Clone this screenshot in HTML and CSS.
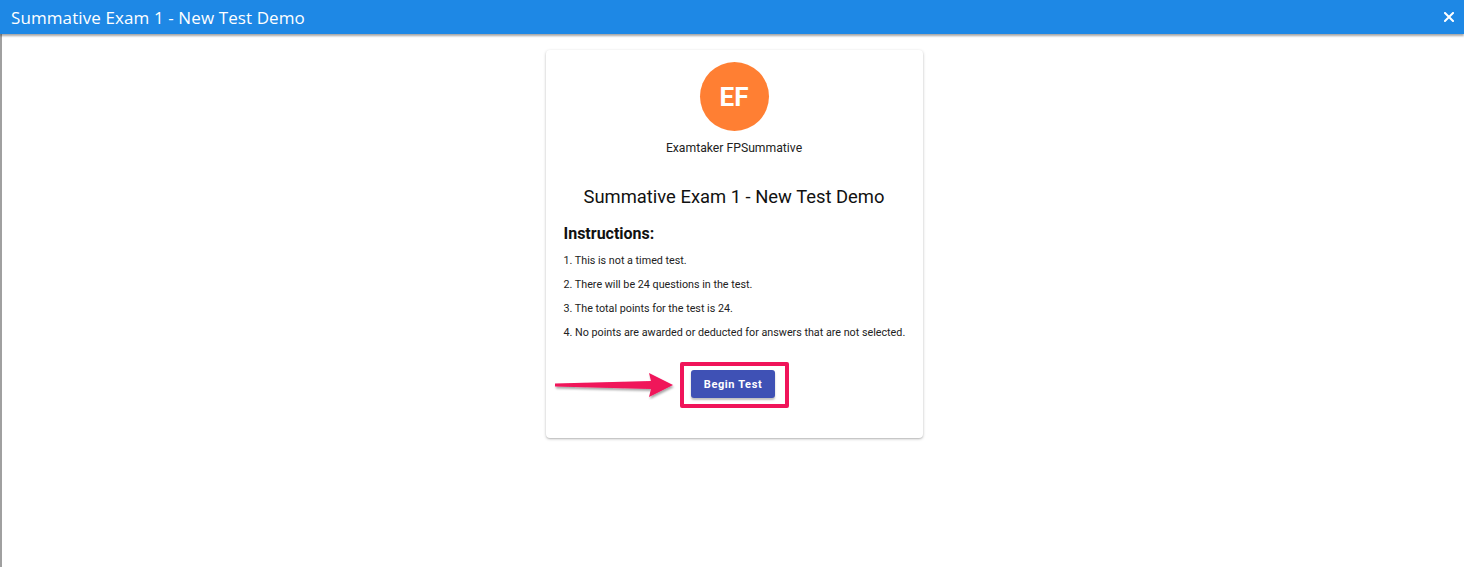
FILE: index.html
```html
<!DOCTYPE html>
<html lang="en">
<head>
    <meta charset="UTF-8">
    <meta name="viewport" content="width=device-width, initial-scale=1.0">
    <title>Summative Exam 1 - New Test Demo</title>
    <link rel="stylesheet" href="styles.css">
</head>
<body>

    <!-- Top bar -->
    <header class="topbar">
        <span class="topbar-title">Summative Exam 1 - New Test Demo</span>
        <button class="close-btn" aria-label="Close">
            <svg width="10" height="10" viewBox="0 0 10 10">
                <path d="M1 1 L9 9 M9 1 L1 9" stroke="#fff" stroke-width="2" stroke-linecap="square"/>
            </svg>
        </button>
    </header>

    <main class="content">
        <div class="card">
            <div class="avatar">EF</div>
            <p class="user-name">Examtaker FPSummative</p>

            <h2 class="exam-title">Summative Exam 1 - New Test Demo</h2>

            <div class="instructions">
                <h3>Instructions:</h3>
                <ol>
                    <li>1. This is not a timed test.</li>
                    <li>2. There will be 24 questions in the test.</li>
                    <li>3. The total points for the test is 24.</li>
                    <li>4. No points are awarded or deducted for answers that are not selected.</li>
                </ol>
            </div>

            <div class="begin-row">
                <!-- annotation arrow -->
                <svg class="arrow" width="124" height="30" viewBox="0 0 124 30">
                    <defs>
                        <filter id="shadow" x="-10%" y="-30%" width="120%" height="180%">
                            <feDropShadow dx="1" dy="2" stdDeviation="1.2" flood-color="#000" flood-opacity="0.35"/>
                        </filter>
                    </defs>
                    <path d="M2 13.5 L98 11 L96 3 L120 15 L96 27 L98 19 L2 16.5 Z" fill="#f0145a" filter="url(#shadow)"/>
                </svg>
                <div class="highlight">
                    <button class="begin-btn">Begin Test</button>
                </div>
            </div>
        </div>
    </main>

</body>
</html>
```

FILE: styles.css
```css
body {
    margin: 0;
    font-family: Roboto, Arial, sans-serif;
    background-color: #fff;
    color: #212121;
}

.topbar {
    height: 34px;
    background-color: #1e88e5;
    display: flex;
    align-items: center;
    justify-content: space-between;
    padding: 0 6px 0 11px;
    box-shadow: 0 2px 2px rgba(0, 0, 0, 0.35);
    position: relative;
}

.topbar-title {
    color: #fff;
    font-family: "Open Sans", sans-serif;
    font-size: 17px;
    letter-spacing: 0.1px;
}

.close-btn {
    background: none;
    border: none;
    padding: 4px;
    display: flex;
    cursor: pointer;
}

.content {
    border-left: 2px solid #a0a0a0;
    min-height: 533px;
    box-sizing: border-box;
    display: flex;
    justify-content: center;
    align-items: flex-start;
    padding-top: 16px;
}

.card {
    width: 377px;
    box-sizing: border-box;
    margin-left: 2px;
    background: #fff;
    border-radius: 4px;
    box-shadow: 0 1px 3px rgba(0, 0, 0, 0.25), 0 1px 1px rgba(0, 0, 0, 0.08);
    padding: 12px 18px 30px;
    display: flex;
    flex-direction: column;
    align-items: center;
}

.avatar {
    width: 69px;
    height: 69px;
    border-radius: 50%;
    background-color: #ff7f33;
    color: #fff;
    font-size: 26px;
    font-weight: 700;
    display: flex;
    align-items: center;
    justify-content: center;
}

.user-name {
    margin: 10px 0 0;
    font-size: 12.2px;
    color: #222;
}

.exam-title {
    margin: 31px 0 0;
    font-size: 18.4px;
    font-weight: 400;
    color: #111;
}

.instructions {
    align-self: stretch;
    margin-top: 17px;
}

.instructions h3 {
    margin: 0 0 6px;
    font-size: 16px;
    font-weight: 700;
    color: #111;
}

.instructions ol {
    list-style: none;
    margin: 0;
    padding: 0;
}

.instructions li {
    font-size: 10.75px;
    line-height: 24px;
    white-space: nowrap;
    color: #222;
}

.begin-row {
    position: relative;
    margin-top: 17px;
    margin-left: 1px;
}

.highlight {
    border: 4px solid #f0145a;
    border-radius: 2px;
    padding: 4px 10px 6px 7px;
}

.begin-btn {
    display: block;
    width: 84px;
    height: 28px;
    border: none;
    border-radius: 3px;
    background-color: #3f51b5;
    color: #fff;
    font-family: Roboto, Arial, sans-serif;
    font-size: 11px;
    font-weight: 700;
    letter-spacing: 0.6px;
    box-shadow: 0 2px 2px rgba(0, 0, 0, 0.25);
    cursor: pointer;
}

.arrow {
    position: absolute;
    left: -127px;
    top: 8px;
}
```
